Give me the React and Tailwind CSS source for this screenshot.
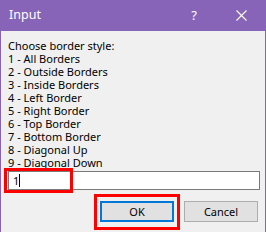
import React from 'react';

const options = [
  '1 - All Borders',
  '2 - Outside Borders',
  '3 - Inside Borders',
  '4 - Left Border',
  '5 - Right Border',
  '6 - Top Border',
  '7 - Bottom Border',
  '8 - Diagonal Up',
  '9 - Diagonal Down',
];

export default function App() {
  return (
    <div
      className="w-[266px] h-[232px] bg-[#f0f0f0] border-x border-[#8764b8] flex flex-col overflow-hidden"
      style={{ fontFamily: '"Noto Sans", "Open Sans", sans-serif' }}
    >
      {/* title bar */}
      <div className="h-[31px] bg-[#8764b8] flex items-center text-white shrink-0 -mx-px">
        <span className="pl-[9px] text-[12.5px] flex-1">Input</span>
        <span className="text-[13px] w-[10px] mr-[37px] text-center">?</span>
        <svg width="11" height="11" viewBox="0 0 11 11" className="mr-[19px]">
          <path d="M0.5 0.5 L10.5 10.5 M10.5 0.5 L0.5 10.5" stroke="white" strokeWidth="1.1" />
        </svg>
      </div>

      {/* body */}
      <div className="flex flex-col pl-[7px] pr-[6px] pt-[8px] text-[11px] text-black leading-[13px]">
        <div>Choose border style:</div>
        {options.map((o) => (
          <div key={o}>{o}</div>
        ))}

        <div className="relative mt-[2px]">
          <div className="h-[19px] w-[252px] bg-white border border-[#7a7a7a] flex items-center pl-[4px] text-[11px]">
            1<span className="w-px h-[13px] bg-black"></span>
          </div>
          <div className="absolute left-[-4px] top-[-3px] w-[69px] h-[25px] border-[3px] border-[#ff0000]"></div>
        </div>

        <div className="flex justify-end gap-[10px] mt-[11px] pr-[1px]">
          <div className="relative">
            <div className="w-[74px] h-[21px] bg-[#e1e1e1] border-2 border-[#0078d7] flex items-center justify-center text-[11px]">
              OK
            </div>
            <div className="absolute left-[-6px] top-[-7px] w-[86px] h-[36px] border-[3px] border-[#ff0000]"></div>
          </div>
          <div className="w-[74px] h-[21px] bg-[#e1e1e1] border border-[#adadad] flex items-center justify-center text-[11px]">
            Cancel
          </div>
        </div>
      </div>
    </div>
  );
}
